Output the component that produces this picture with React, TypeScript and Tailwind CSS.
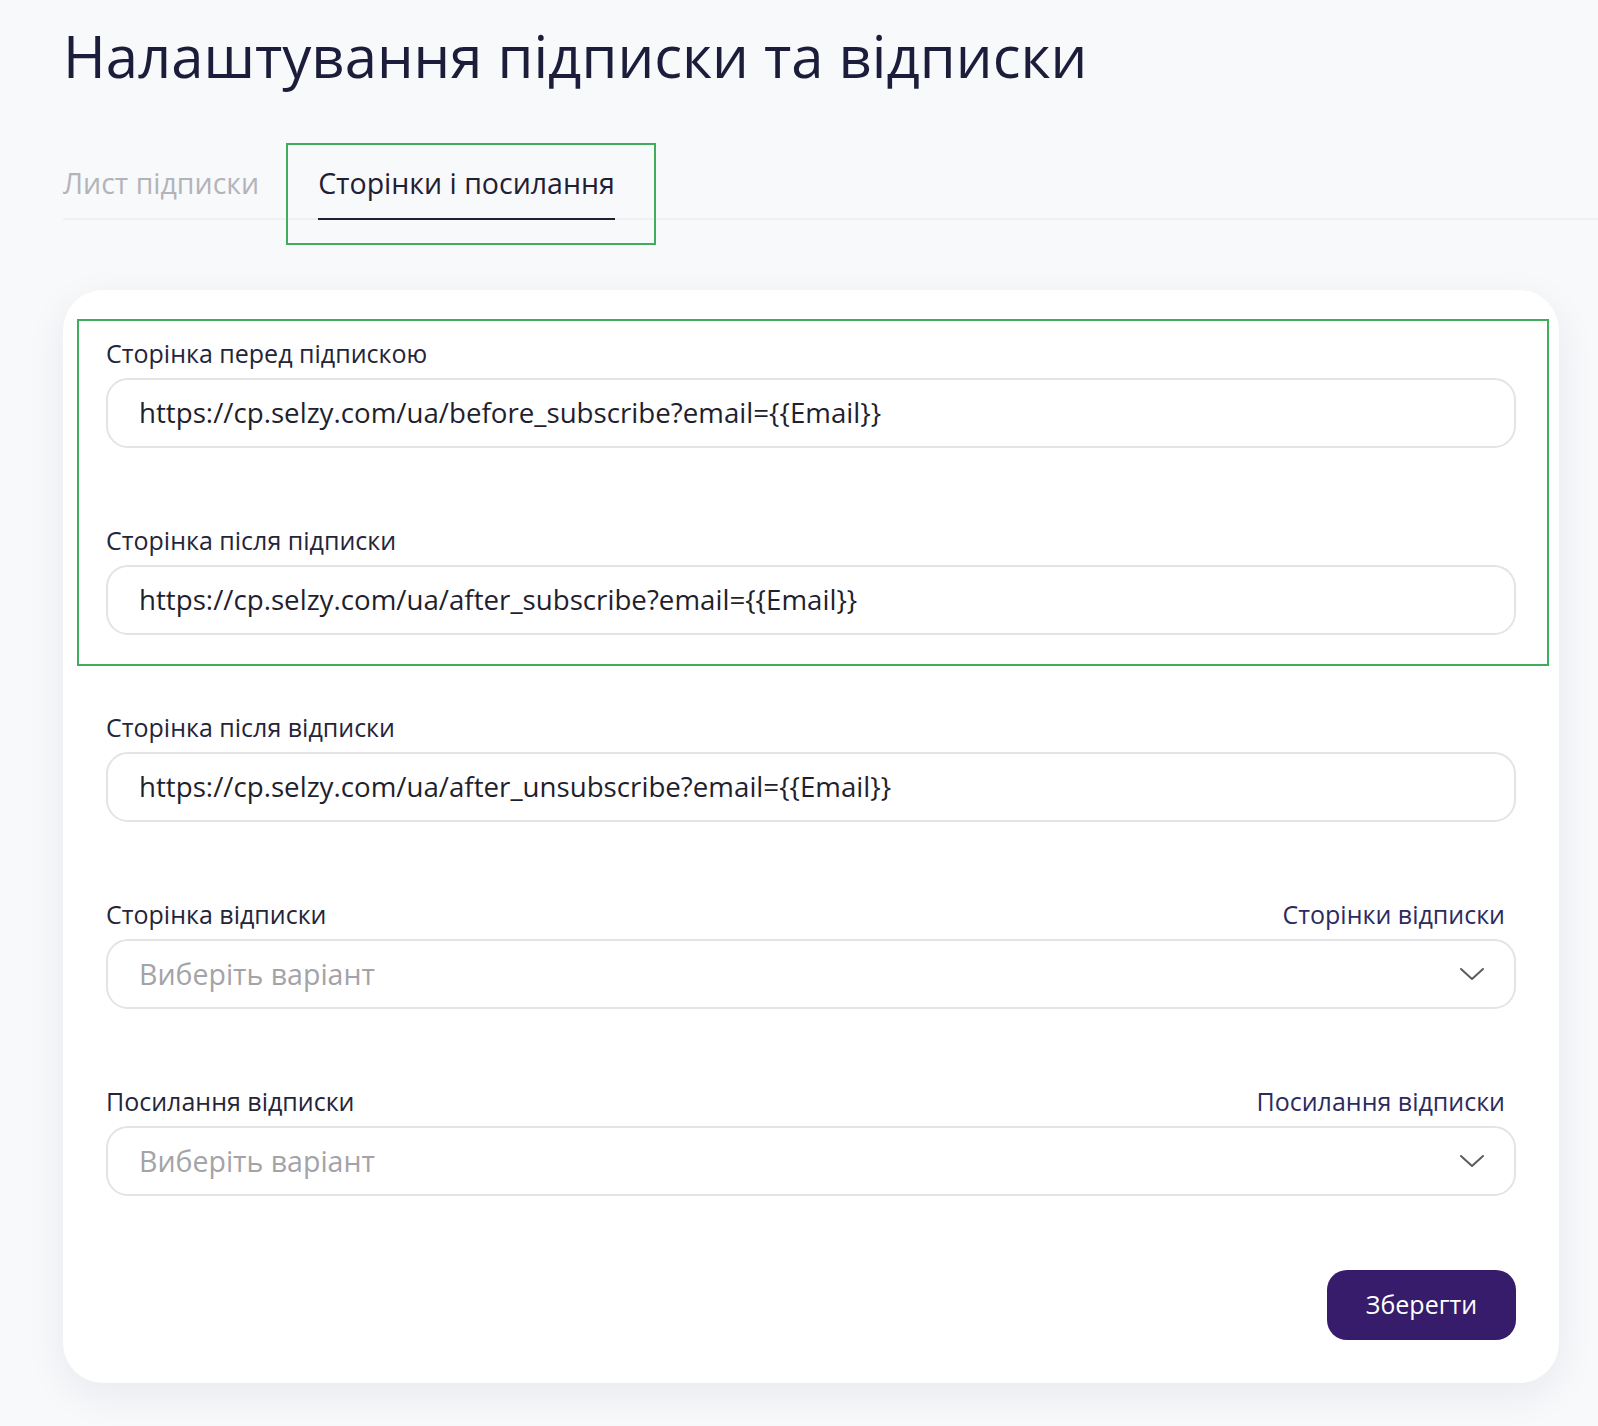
import React from "react";

const font = { fontFamily: '"Open Sans", "Noto Sans", sans-serif' };

function Chevron() {
  return (
    <svg width="26" height="16" viewBox="0 0 26 16" fill="none">
      <path d="M2 3 L13 13 L24 3" stroke="#5a5a60" strokeWidth="2" strokeLinecap="round" strokeLinejoin="round" />
    </svg>
  );
}

function Field({ label, value, link, select }: { label: string; value: string; link?: string; select?: boolean }) {
  return (
    <div className="flex flex-col gap-[9px]">
      <div className="flex items-center justify-between h-[32px] pr-[11px]">
        <span className="text-[25px] leading-[32px] text-[#25253a]">{label}</span>
        {link && <span className="text-[25px] leading-[32px] text-[#2d2b5e]">{link}</span>}
      </div>
      <div className="h-[70px] rounded-[22px] border-2 border-[#e4e4e6] bg-white flex items-center justify-between pl-[31px] pr-[29px]">
        <span className={select ? "text-[28.5px] text-[#a3a3a8]" : "text-[27.7px] text-[#1f1f2e]"}>{value}</span>
        {select && <Chevron />}
      </div>
    </div>
  );
}

export default function App() {
  return (
    <div className="min-h-[1426px] bg-[#f8f9fb] pl-[63px] pt-[18px]" style={font}>
      <h1 className="text-[58px] leading-[76px] text-[#1b1d3a] font-normal">Налаштування підписки та відписки</h1>
      <div className="mt-[50px] flex items-end border-b-2 border-[#eef0f3] h-[76px]">
        <div className="text-[28.5px] text-[#b3b4ba] pb-[15px] leading-[40px]">Лист підписки</div>
        <div className="relative ml-[59px]">
          <div className="text-[28.5px] text-[#1f2033] leading-[40px] pb-[15px] border-b-2 border-[#1f2033] -mb-[2px]">Сторінки і посилання</div>
          <div className="absolute -left-[32px] -right-[41px] -top-[20px] -bottom-[27px] border-2 border-[#3eae5c] pointer-events-none" />
        </div>
      </div>
      <div className="mt-[70px] mr-[39px] bg-white rounded-[40px] shadow-[0_12px_40px_rgba(20,30,60,0.07)] px-[43px] pt-[47px] pb-[43px]">
        <div className="flex flex-col gap-[76px]">
          <div className="relative flex flex-col gap-[76px]">
            <Field label="Сторінка перед підпискою" value="https://cp.selzy.com/ua/before_subscribe?email={{Email}}" />
            <Field label="Сторінка після підписки" value="https://cp.selzy.com/ua/after_subscribe?email={{Email}}" />
            <div className="absolute -left-[29px] -right-[33px] -top-[18px] -bottom-[31px] border-2 border-[#3eae5c] pointer-events-none" />
          </div>
          <Field label="Сторінка після відписки" value="https://cp.selzy.com/ua/after_unsubscribe?email={{Email}}" />
          <Field label="Сторінка відписки" value="Виберіть варіант" link="Сторінки відписки" select />
          <Field label="Посилання відписки" value="Виберіть варіант" link="Посилання відписки" select />
        </div>
        <div className="flex justify-end mt-[74px]">
          <button className="h-[70px] w-[189px] rounded-[20px] bg-[#361c6b] text-white text-[25px]">Зберегти</button>
        </div>
      </div>
    </div>
  );
}
